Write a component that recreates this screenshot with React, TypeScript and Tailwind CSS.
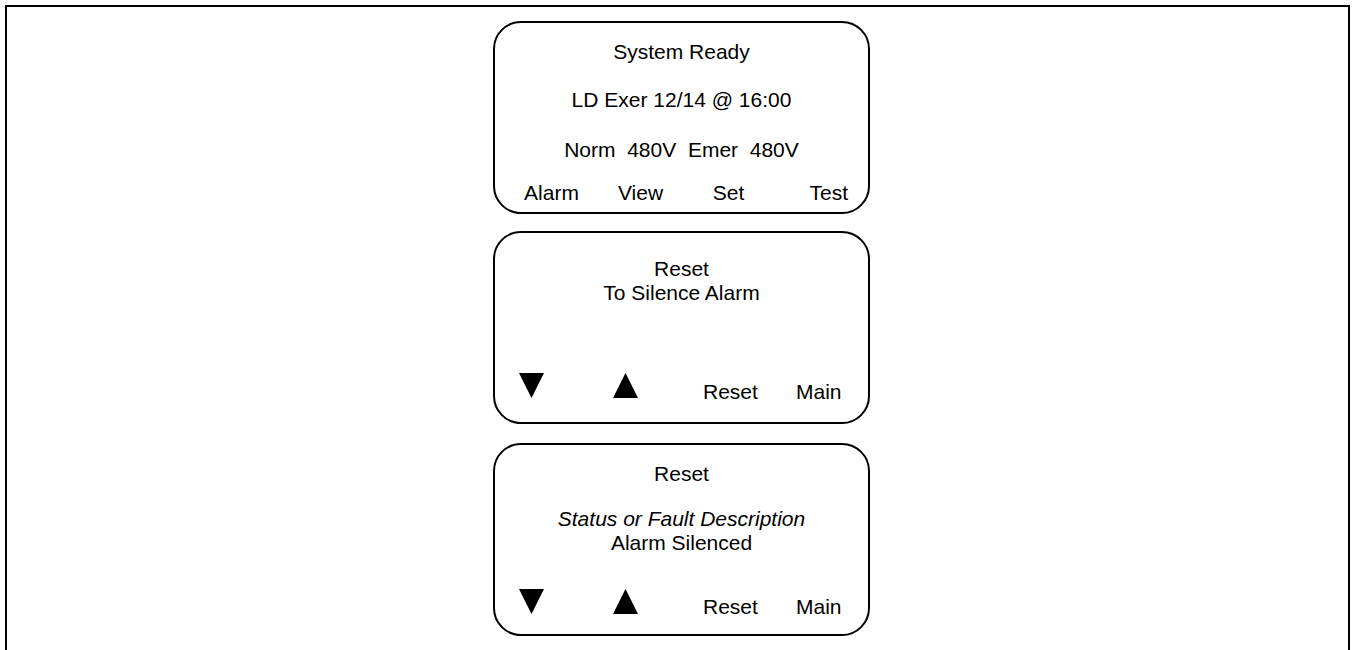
import React from 'react';

const Down: React.FC = () => (
  <svg width="25" height="25" viewBox="0 0 25 25" className="block">
    <polygon points="0,0 25,0 12.5,25" fill="#000" />
  </svg>
);

const Up: React.FC = () => (
  <svg width="25" height="25" viewBox="0 0 25 25" className="block">
    <polygon points="12.5,0 25,25 0,25" fill="#000" />
  </svg>
);

const Panel: React.FC<{ children: React.ReactNode; className?: string }> = ({ children, className = '' }) => (
  <div className={`w-[377px] h-[193px] border-2 border-black rounded-[28px] flex flex-col ${className}`}>
    {children}
  </div>
);

// bottom row with arrow keys, used by the two menu screens
const ArrowRow: React.FC<{ className?: string; textOffset: string }> = ({ className = '', textOffset }) => (
  <div className={`flex items-start h-[30px] ${className}`}>
    <div className="ml-[24px] w-[25px]">
      <Down />
    </div>
    <div className="ml-[69px] w-[25px]">
      <Up />
    </div>
    <span className={`ml-[65px] w-[53px] text-center leading-6 ${textOffset}`}>Reset</span>
    <span className={`ml-[40px] w-[45px] text-center leading-6 ${textOffset}`}>Main</span>
  </div>
);

export default function App() {
  return (
    <div className="min-h-[650px] bg-white text-black font-['Liberation_Sans',Arial,sans-serif] text-[21px] overflow-hidden h-[650px]">
      <div className="mt-[5px] ml-[5px] w-[1345px] h-[700px] border-2 border-black">
        <div className="flex flex-col pl-[486px] pt-[14px]">
          <Panel>
            <div className="pt-[17px] text-center leading-6">System Ready</div>
            <div className="mt-[24px] text-center leading-6">LD Exer 12/14 @ 16:00</div>
            <div className="mt-[26px] text-center leading-6 whitespace-pre">Norm  480V  Emer  480V</div>
            <div className="mt-[19px] flex leading-6">
              <span className="ml-[12px] w-[89px] text-center">Alarm</span>
              <span className="w-[89px] text-center">View</span>
              <span className="w-[87px] text-center">Set</span>
              <span className="w-[76px] text-right">Test</span>
            </div>
          </Panel>

          <Panel className="mt-[17px]">
            <div className="pt-[24px] text-center leading-6">Reset</div>
            <div className="text-center leading-6">To Silence Alarm</div>
            <ArrowRow className="mt-[68px]" textOffset="mt-[7px]" />
          </Panel>

          <Panel className="mt-[19px]">
            <div className="pt-[17px] text-center leading-6">Reset</div>
            <div className="mt-[21px] text-center leading-6 italic">Status or Fault Description</div>
            <div className="text-center leading-6">Alarm Silenced</div>
            <ArrowRow className="mt-[34px]" textOffset="mt-[6px]" />
          </Panel>
        </div>
      </div>
    </div>
  );
}
